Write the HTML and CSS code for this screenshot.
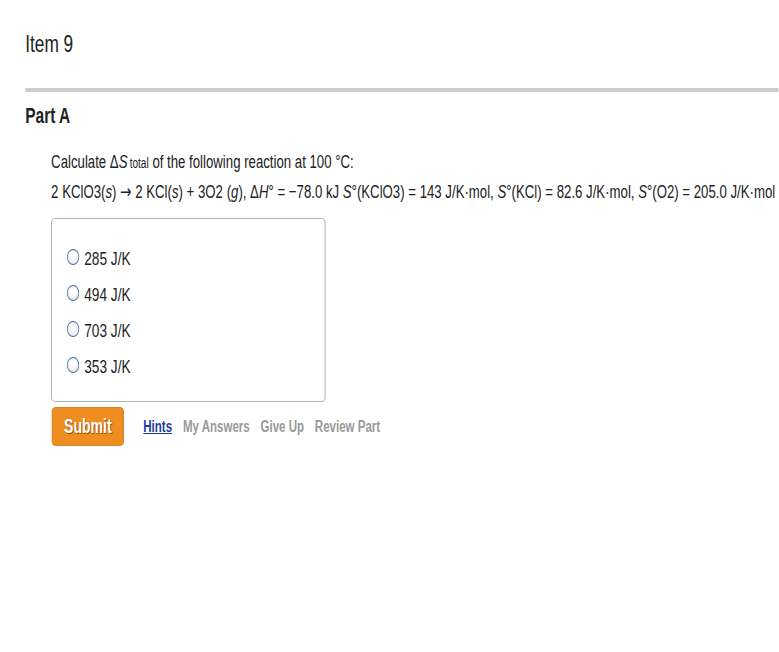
FILE: index.html
```html
<!DOCTYPE html>
<html lang="en">
<head>
<meta charset="utf-8">
<title>Item 9</title>
<link rel="stylesheet" href="styles.css">
</head>
<body>
<div class="page">
  <h1 class="item-title">Item 9</h1>
  <div class="rule"></div>
  <h2 class="part-title">Part A</h2>
  <div class="question">
    <p class="q-line">Calculate Δ<i>S</i><span class="small">total</span> of the following reaction at 100 °C:</p>
    <p class="q-line">2 KClO3(<i>s</i>) <span class="arrow">→</span> 2 KCl(<i>s</i>) + 3O2 (<i>g</i>), Δ<i>H</i>° = −78.0 kJ <i>S</i>°(KClO3) = 143 J/K·mol, <i>S</i>°(KCl) = 82.6 J/K·mol, <i>S</i>°(O2) = 205.0 J/K·mol</p>
  </div>
  <div class="choices">
    <label class="choice"><span class="radio"></span><span>285 J/K</span></label>
    <label class="choice"><span class="radio"></span><span>494 J/K</span></label>
    <label class="choice"><span class="radio"></span><span>703 J/K</span></label>
    <label class="choice"><span class="radio"></span><span>353 J/K</span></label>
  </div>
  <div class="actions">
    <button class="submit">Submit</button>
    <nav class="links">
      <a class="link active">Hints</a>
      <a class="link">My Answers</a>
      <a class="link">Give Up</a>
      <a class="link">Review Part</a>
    </nav>
  </div>
</div>
</body>
</html>
```
FILE: styles.css
```css
html, body {
  margin: 0;
  padding: 0;
  overflow: hidden;
  background: #fff;
}
.page {
  width: 1081px;
  transform: scaleX(0.72);
  transform-origin: 0 0;
  font-family: "Liberation Sans", Arial, sans-serif;
  color: #222;
  padding-top: 32px;
}
.item-title {
  margin: 0 0 0 35px;
  font-size: 24px;
  line-height: 24px;
  font-weight: normal;
}
.rule {
  margin: 32px 0 0 35px;
  height: 4px;
  background: #cccccc;
}
.part-title {
  margin: 14px 0 0 35px;
  font-size: 21.5px;
  line-height: 21px;
  font-weight: bold;
}
.question {
  margin: 21px 0 0 71px;
}
.q-line {
  margin: 0;
  font-size: 18.35px;
  line-height: 28px;
  white-space: nowrap;
}
.small {
  font-size: 14px;
  margin-left: 3px;
}
.arrow {
  font-family: "DejaVu Sans", sans-serif;
  font-size: 19px;
}
.choices {
  margin: 12px 0 0 71px;
  border: 1px solid #a8a8a8;
  border-radius: 5px;
  padding: 22px 0 0 21px;
  box-sizing: border-box;
  height: 184px;
  width: 381px;
  display: flex;
  flex-direction: column;
}
.choice {
  display: flex;
  align-items: center;
  height: 36px;
  font-size: 19px;
  color: #222;
}
.radio {
  width: 15px;
  height: 14px;
  border: 1.5px solid #3d6fa6;
  border-radius: 50%;
  background: radial-gradient(circle at 50% 40%, #ffffff 30%, #d8d8d8 100%);
  margin: 0 7px 5px 0;
  flex: none;
}
.actions {
  margin: 5px 0 0 72px;
  display: flex;
  align-items: center;
}
.submit {
  width: 100px;
  height: 39px;
  background: #ef8d20;
  border: 1px solid #d37a18;
  border-radius: 5px;
  color: #fff;
  font-family: "Liberation Sans", Arial, sans-serif;
  font-weight: bold;
  font-size: 19.5px;
  text-shadow: 1px 1px 1px #8a4a0a;
  padding: 0;
}
.links {
  display: flex;
  gap: 15px;
  margin-left: 27px;
}
.link {
  font-size: 16px;
  font-weight: bold;
  color: #999;
  text-decoration: none;
}
.link.active {
  color: #1b3c9b;
  text-decoration: underline;
}
```
